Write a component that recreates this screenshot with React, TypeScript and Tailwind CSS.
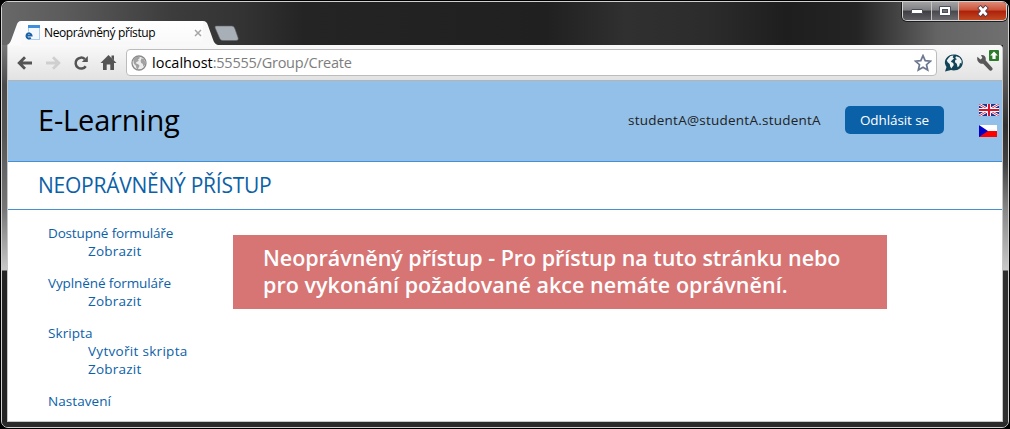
import type { ReactNode } from "react";

type Entry = { text: string; track: string };

const menu: { head: Entry; items: Entry[] }[] = [
  {
    head: { text: "Dostupné formuláře", track: "tracking-[-0.16px]" },
    items: [{ text: "Zobrazit", track: "tracking-[0.22px]" }],
  },
  {
    head: { text: "Vyplněné formuláře", track: "tracking-[-0.1px]" },
    items: [{ text: "Zobrazit", track: "tracking-[0.22px]" }],
  },
  {
    head: { text: "Skripta", track: "tracking-[0.07px]" },
    items: [
      { text: "Vytvořit skripta", track: "tracking-[0.3px]" },
      { text: "Zobrazit", track: "tracking-[0.22px]" },
    ],
  },
  { head: { text: "Nastavení", track: "tracking-[0.07px]" }, items: [] },
];

function Favicon() {
  return (
    <svg width="16" height="16" viewBox="0 0 16 16" className="shrink-0">
      <rect x="3.5" y="0.5" width="11" height="14" fill="#f2f8fe" stroke="#a9cdf0" />
      <rect x="3" y="0" width="12" height="3" fill="#3f8fdc" />
      <circle cx="4" cy="10.5" r="4" fill="#ffffff" />
      <path d="M1.6 10.6H6.6A2.6 2.6 0 1 0 5.8 12.8" fill="none" stroke="#1b62a8" strokeWidth="1.9" />
    </svg>
  );
}

function TabStrip() {
  return (
    <div className="flex h-[24px] items-start">
      <svg width="14" height="24" viewBox="0 0 14 24" className="shrink-0">
        <path d="M0 24C2 23 3 22 4 19.500L9.500 4.500C10.500 1.500 11.500 0 14 0V24Z" fill="#fbfbfb" />
      </svg>
      <div className="flex h-[24px] w-[182px] items-center bg-gradient-to-b from-white to-[#f8f8f8] pl-[4px]">
        <Favicon />
        <span className="ml-[3px] w-[150px] whitespace-nowrap text-[12px] leading-[16px] tracking-[-0.38px] text-black">
          Neoprávněný přístup
        </span>
        <svg width="8" height="8" viewBox="0 0 8 8" className="shrink-0">
          <path d="M1 1L7 7M7 1L1 7" stroke="#a6a6a6" strokeWidth="1.500" />
        </svg>
      </div>
      <svg width="16" height="24" viewBox="0 0 16 24" className="shrink-0">
        <path d="M0 0C3 0 4 1.500 5 4.500L10 18.500C11 21.500 12 23 15 24H0Z" fill="#f8f8f8" />
      </svg>
      <svg width="27" height="24" viewBox="0 0 27 24" className="-ml-[6px] shrink-0">
        <path d="M3 5H18.500C20.500 5 21.300 6 22 8L25 16.500C25.700 18.500 25 19.500 23 19.500H10C8 19.500 7 18.500 6.300 16.500L2.300 7.300C1.900 6 2 5 3 5Z" fill="#a9afb7" stroke="#5d6167" strokeWidth="0.600" />
      </svg>
    </div>
  );
}

function WindowButtons() {
  return (
    <div className="mr-px flex h-[19px] w-[105px] overflow-hidden rounded-b-[5px] border border-t-0 border-[#d2d2d2] shadow-[0_0_0_1px_#1d1d1d]">
      <div className="flex w-[29px] items-center justify-center border-r border-[#c4c4c4] bg-linear-[180deg,#a2a2a4_0%,#808084_45%,#3e3e42_50%,#5e5e62_100%]">
        <svg width="14" height="8" viewBox="0 0 14 8">
          <rect x="1.500" y="2.500" width="11" height="4" rx="0.500" fill="#fff" stroke="#4a4f5c" />
        </svg>
      </div>
      <div className="flex w-[27px] items-center justify-center border-r border-[#c4c4c4] bg-linear-[180deg,#a2a2a4_0%,#808084_45%,#48484c_50%,#6c6c70_100%]">
        <svg width="14" height="12" viewBox="0 0 14 12">
          <path d="M1.500 1.500H12.500V10.500H1.500Z" fill="#fff" stroke="#4a4f5c" />
          <rect x="4.500" y="4.500" width="5" height="3" fill="#6f6f74" stroke="#4a4f5c" />
        </svg>
      </div>
      <div className="flex flex-1 items-center justify-center bg-linear-[180deg,#dc8a78_0%,#cb5238_45%,#ae2009_50%,#c04a24_100%]">
        <svg width="14" height="12" viewBox="0 0 14 12">
          <path d="M3 1.500L11 10.500M11 1.500L3 10.500" stroke="#4f3b48" strokeWidth="4.800" />
          <path d="M3.500 2L10.500 10M10.500 2L3.500 10" stroke="#fff" strokeWidth="2.900" />
        </svg>
      </div>
    </div>
  );
}

function Arrow({ flip, color }: { flip?: boolean; color: string }) {
  return (
    <svg width="16" height="14" viewBox="0 0 16 14" className={flip ? "shrink-0 -scale-x-100" : "shrink-0"}>
      <path d="M15 7H3M8 1.300L2.200 7L8 12.700" fill="none" stroke={color} strokeWidth="2.800" />
    </svg>
  );
}

function Toolbar() {
  return (
    <div className="flex h-[36px] items-center rounded-tr-[4px] border-b border-[#b4b4b4] bg-gradient-to-b from-[#f9f9f9] to-[#e2e2e2] pl-[9px]">
      <Arrow color="#545454" />
      <div className="ml-[12px] flex">
        <Arrow flip color="#cfcfcf" />
      </div>
      <svg width="16" height="16" viewBox="0 0 16 16" className="ml-[12px] shrink-0">
        <path d="M12.700 11.200A5.500 5.500 0 1 1 11.800 4" fill="none" stroke="#545454" strokeWidth="2.500" />
        <path d="M14.800 1V7H8.800Z" fill="#545454" />
      </svg>
      <svg width="17" height="17" viewBox="0 0 17 17" className="ml-[11px] shrink-0">
        <path d="M8.500 1L16.500 9H14V16H10.300V10.500H6.700V16H3V9H0.500Z" fill="#545454" />
        <path d="M11.500 1.500H14V6.500L11.500 4Z" fill="#545454" />
      </svg>
      <div className="ml-[9px] flex h-[27px] w-[811px] items-center rounded-[4px] border border-[#bcbcbc] bg-white pl-[4px] pr-[4px]">
        <svg width="16" height="16" viewBox="0 0 16 16" className="shrink-0">
          <circle cx="8" cy="8" r="7" fill="#ededed" stroke="#8b8b8b" strokeWidth="1.300" />
          <path d="M2.200 4.500L4.500 2L8 1.700L9 3L7.200 4.300L7.600 6L5.500 7L4.700 8.300L7.200 9.300L8.600 10.700L7.800 12.300L6.800 14.300L5.400 13.500L5 10.800L2.900 8.800Z" fill="#a2a2a2" />
          <path d="M10.500 3.300L13 4.300L14.400 7.500L14 9.800L12.300 11.500L11.800 9L10 7.800L9.600 5.800Z" fill="#a2a2a2" />
        </svg>
        <div className="ml-[5px] flex-1 whitespace-nowrap text-[14.5px] leading-[20px] text-black">
          localhost<span className="tracking-[-0.24px] text-[#7d7d7d]">:55555/Group/Create</span>
        </div>
        <svg width="18" height="18" viewBox="0 0 18 18" className="shrink-0">
          <path d="M9 1.600L11.200 6.600L16.500 7.100L12.500 10.700L13.700 16L9 13.200L4.300 16L5.500 10.700L1.500 7.100L6.800 6.600Z" fill="#fff" stroke="#6d7890" strokeWidth="1.700" />
        </svg>
      </div>
      <svg width="20" height="20" viewBox="0 0 20 20" className="ml-[7px] shrink-0">
        <path d="M1 18.500L2.500 14A9 8 0 1 1 7 17Z" fill="#134558" />
        <path d="M4.200 5.500L6.500 3L9.500 2.500L8.700 4.300L10 5.500L8 7.200L6.800 8.800L9.200 10L9.800 12L8.300 14L7.300 15.600L6.200 13.500L5.700 11L3.700 9.300L2.800 7.500Z" fill="#f1f5f6" />
        <path d="M12 3.200L15.500 4.500L17.600 7.500L17.500 10.500L16 10L15.200 13L13.600 14.200L12.800 10.700L11 9.300L11.200 7L13 6.200L11.300 5Z" fill="#f1f5f6" />
      </svg>
      <div className="relative ml-[12px] h-[20px] w-[20px]">
        <svg width="20" height="20" viewBox="0 0 20 20">
          <path d="M2 2.400L5 5.200L7 3.800L5.600 0.800C8.500 0 11.300 2.700 10.300 6L17 13.600C18.500 15.500 16 18 14.200 16.400L7.800 9.600C4.600 10.500 0.500 7 2 2.400Z" transform="translate(-0.500 1.300) scale(0.980)" fill="#585858" />
        </svg>
        <svg width="10" height="11" viewBox="0 0 10 11" className="absolute left-[13px] -top-[3px]">
          <rect width="10" height="11" rx="1" fill="#2c7a2b" />
          <path d="M5 1.500L8.800 5.500H6.600V9H3.400V5.500H1.200Z" fill="#fff" />
        </svg>
      </div>
    </div>
  );
}

function UkFlag() {
  return (
    <svg width="20" height="12" viewBox="0 0 20 12">
      <rect width="20" height="12" fill="#23318f" />
      <path d="M0 0L20 12M20 0L0 12" stroke="#fff" strokeWidth="2.600" />
      <path d="M0 0L20 12M20 0L0 12" stroke="#d8233c" strokeWidth="0.900" />
      <path d="M10 0V12M0 6H20" stroke="#fff" strokeWidth="4" />
      <path d="M10 0V12M0 6H20" stroke="#d8142c" strokeWidth="2.200" />
    </svg>
  );
}

function CzFlag() {
  return (
    <svg width="18" height="12" viewBox="0 0 18 12">
      <rect width="18" height="6" fill="#fff" />
      <rect y="6" width="18" height="6" fill="#fe0000" />
      <path d="M0 0L9 6L0 12Z" fill="#0000c8" />
    </svg>
  );
}

function MenuLink({ entry, children }: { entry: Entry; children?: ReactNode }) {
  return (
    <li>
      <a href="#" className={`block whitespace-nowrap ${entry.track}`}>{entry.text}</a>
      {children}
    </li>
  );
}

function Page() {
  return (
    <div className="flex-1 bg-white">
      <header className="flex h-[81px] items-center border-b border-[#4390d3] bg-[#92c0e9] pb-[2px] pl-[30px]">
        <h1 className="flex-1 whitespace-nowrap text-[29px] leading-[36px] tracking-[-0.18px] text-black">E-Learning</h1>
        <span className="w-[217px] whitespace-nowrap text-[13.5px] leading-[18px] tracking-[0.24px] text-[#222]">
          studentA@studentA.studentA
        </span>
        <button className="h-[28px] w-[99px] whitespace-nowrap rounded-[5px] bg-[#0b61a8] text-[13.5px] leading-[18px] tracking-[-0.09px] text-white">
          Odhlásit se
        </button>
        <div className="ml-[35px] flex w-[23px] flex-col gap-[9px]">
          <UkFlag />
          <CzFlag />
        </div>
      </header>
      <div className="flex h-[48px] items-center border-b border-[#4390d3] pb-px pl-[30px]">
        <h2 className="whitespace-nowrap text-[21px] leading-[28px] tracking-[-0.25px] text-[#0b61a8]">NEOPRÁVNĚNÝ PŘÍSTUP</h2>
      </div>
      <div className="flex items-start">
        <ul className="flex w-[225px] flex-col gap-[14px] pl-[40px] pt-[14px] text-[13.5px] leading-[18px] text-[#0b61a8]">
          {menu.map((group) => (
            <MenuLink key={group.head.text} entry={group.head}>
              {group.items.length > 0 && (
                <ul className="pl-[40px]">
                  {group.items.map((item) => (
                    <MenuLink key={item.text} entry={item} />
                  ))}
                </ul>
              )}
            </MenuLink>
          ))}
        </ul>
        <div className="mt-[25px] h-[74px] w-[654px] whitespace-nowrap bg-[#d77474] pl-[30px] pt-[9px] text-[21.5px] font-semibold leading-[27px] text-white">
          <p className="tracking-[-0.04px]">Neoprávněný přístup - Pro přístup na tuto stránku nebo</p>
          <p className="tracking-[0.04px]">pro vykonání požadované akce nemáte oprávnění.</p>
        </div>
      </div>
    </div>
  );
}

export default function App() {
  return (
    <div className="h-[429px] w-[1010px] overflow-hidden bg-black p-px font-['Open_Sans','Noto_Sans',sans-serif]">
      <div className="flex h-[427px] flex-col overflow-hidden rounded-[7px] border border-[#d0d0d0] bg-[#242424]">
        <div className="flex h-[43px] items-start justify-between bg-linear-[90deg,#686868_0%,#5c5c5c_6%,#3c3c3c_17%,#333_24%,#242424_30%,#202020_54%,#303030_62%,#2c2c2c_70%,#1e1e1e_78%,#242424_85%,#646464_93%,#707070_100%]">
          <div className="pl-[5px] pt-[19px]">
            <TabStrip />
          </div>
          <WindowButtons />
        </div>
        <div className="flex min-h-0 flex-1">
          <div className="w-[5px] bg-linear-[180deg,#777_0px,#4c4c4c_40px,#555_90px,#777_165px,#c6c6c6_223px,#c6c6c6_225px,#242424_226px,#242424_100%]" />
          <div className="flex w-[996px] flex-col rounded-tr-[4px] border-x border-b border-[#c3c9cb] bg-white">
            <Toolbar />
            <Page />
          </div>
          <div className="w-[5px] bg-linear-[180deg,#707070_0px,#555_40px,#303030_80px,#444_120px,#888_165px,#c8c8c8_225px,#303030_226px,#303030_100%]" />
        </div>
        <div className="h-[5px] bg-[#2a2a2a]" />
      </div>
    </div>
  );
}
